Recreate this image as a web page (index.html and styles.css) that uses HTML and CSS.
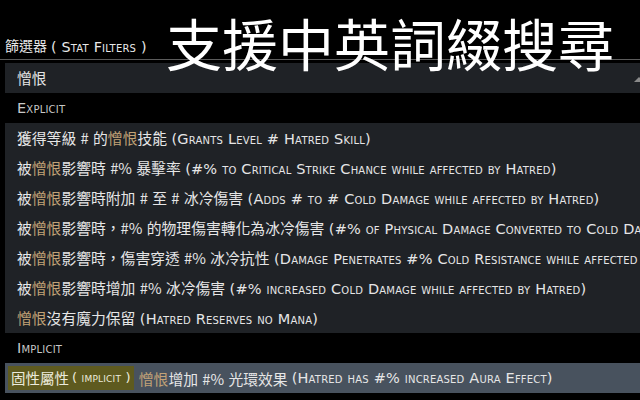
FILE: index.html
```html
<!DOCTYPE html>
<html lang="zh-Hant">
<head>
<meta charset="utf-8">
<link rel="stylesheet" href="styles.css">
</head>
<body>
<div class="page">
  <div class="header"><span class="cjk">篩選器</span> <span class="sc">( Stat Filters )</span></div>
  <div class="search"><span class="cjk">憎恨</span><span class="caret"></span></div>
  <div class="label sc">Explicit</div>
  <div class="list">
    <div class="row"><span class="cjk">獲得等級 # 的<span class="hl">憎恨</span>技能</span> <span class="sc">(Grants Level # Hatred Skill)</span></div>
    <div class="row"><span class="cjk">被<span class="hl">憎恨</span>影響時 #% 暴擊率</span> <span class="sc">(#% to Critical Strike Chance while affected by Hatred)</span></div>
    <div class="row"><span class="cjk">被<span class="hl">憎恨</span>影響時附加 # 至 # 冰冷傷害</span> <span class="sc">(Adds # to # Cold Damage while affected by Hatred)</span></div>
    <div class="row"><span class="cjk">被<span class="hl">憎恨</span>影響時，#% 的物理傷害轉化為冰冷傷害</span> <span class="sc">(#% of Physical Damage Converted to Cold Damage while affected by Hatred)</span></div>
    <div class="row"><span class="cjk">被<span class="hl">憎恨</span>影響時，傷害穿透 #% 冰冷抗性</span> <span class="sc">(Damage Penetrates #% Cold Resistance while affected by Hatred)</span></div>
    <div class="row"><span class="cjk">被<span class="hl">憎恨</span>影響時增加 #% 冰冷傷害</span> <span class="sc">(#% increased Cold Damage while affected by Hatred)</span></div>
    <div class="row"><span class="cjk"><span class="hl">憎恨</span>沒有魔力保留</span> <span class="sc">(Hatred Reserves no Mana)</span></div>
  </div>
  <div class="label sc">Implicit</div>
  <div class="implicit">
    <span class="badge"><span class="cjk">固性屬性</span> <span class="sc">( implicit )</span></span>
    <span class="cjk"><span class="hl">憎恨</span>增加 #% 光環效果</span> <span class="sc">(Hatred has #% increased Aura Effect)</span>
  </div>
  <div class="title">支援中英詞綴搜尋</div>
</div>
</body>
</html>
```
FILE: styles.css
```css
html, body {
  margin: 0;
  padding: 0;
  background: #000;
}
.page {
  position: relative;
  width: 640px;
  height: 400px;
  overflow: hidden;
  font-family: "DejaVu Sans", "Noto Sans CJK TC", sans-serif;
  font-size: 14px;
  color: #e6e6e6;
  white-space: nowrap;
}
.cjk {
  font-family: "Noto Sans CJK TC", sans-serif;
  font-size: 14.8px;
  word-spacing: 1px;
}
.sc {
  font-family: "DejaVu Sans", sans-serif;
  font-variant: small-caps;
  font-size: 14.5px;
  letter-spacing: 0.2px;
}
.hl {
  color: #c2a277;
}
.header {
  height: 60px;
  box-sizing: border-box;
  padding: 0 0 4px 5px;
  display: flex;
  align-items: flex-end;
  gap: 4px;
  border-bottom: 1px solid #5c5c5c;
  color: #e8e8e8;
}
.header .cjk {
  font-size: 14px;
}
.header .sc {
  font-size: 14.3px;
}
.search {
  position: relative;
  margin: 3px 0 0 5px;
  height: 30px;
  line-height: 30px;
  background: #1f2226;
  padding-left: 12px;
}
.caret {
  position: absolute;
  right: -4px;
  top: 14px;
  width: 0;
  height: 0;
  border-left: 5px solid transparent;
  border-right: 5px solid transparent;
  border-bottom: 5px solid #8a8a8a;
}
.label {
  height: 30px;
  line-height: 30px;
  padding-left: 17px;
  color: #c8c8c8;
}
.list {
  margin-left: 5px;
  background: #1f2226;
}
.row {
  height: 30px;
  line-height: 30px;
  padding-left: 12px;
}
.implicit {
  margin-left: 5px;
  height: 30px;
  background: #48525e;
  display: flex;
  align-items: center;
  padding-left: 3px;
  gap: 5px;
}
.badge {
  background: #5e5a1f;
  height: 24px;
  line-height: 24px;
  padding: 0 3px 0 3px;
  display: flex;
  gap: 3px;
  color: #ecebdc;
}
.badge .cjk {
  font-size: 14.5px;
}
.badge .sc {
  font-size: 13px;
}
.implicit > .sc {
  margin-left: -1px;
}
.title {
  position: absolute;
  left: 166px;
  top: 2px;
  font-family: "Noto Sans CJK TC", sans-serif;
  font-size: 56px;
  line-height: 80px;
  color: #fff;
}
```
